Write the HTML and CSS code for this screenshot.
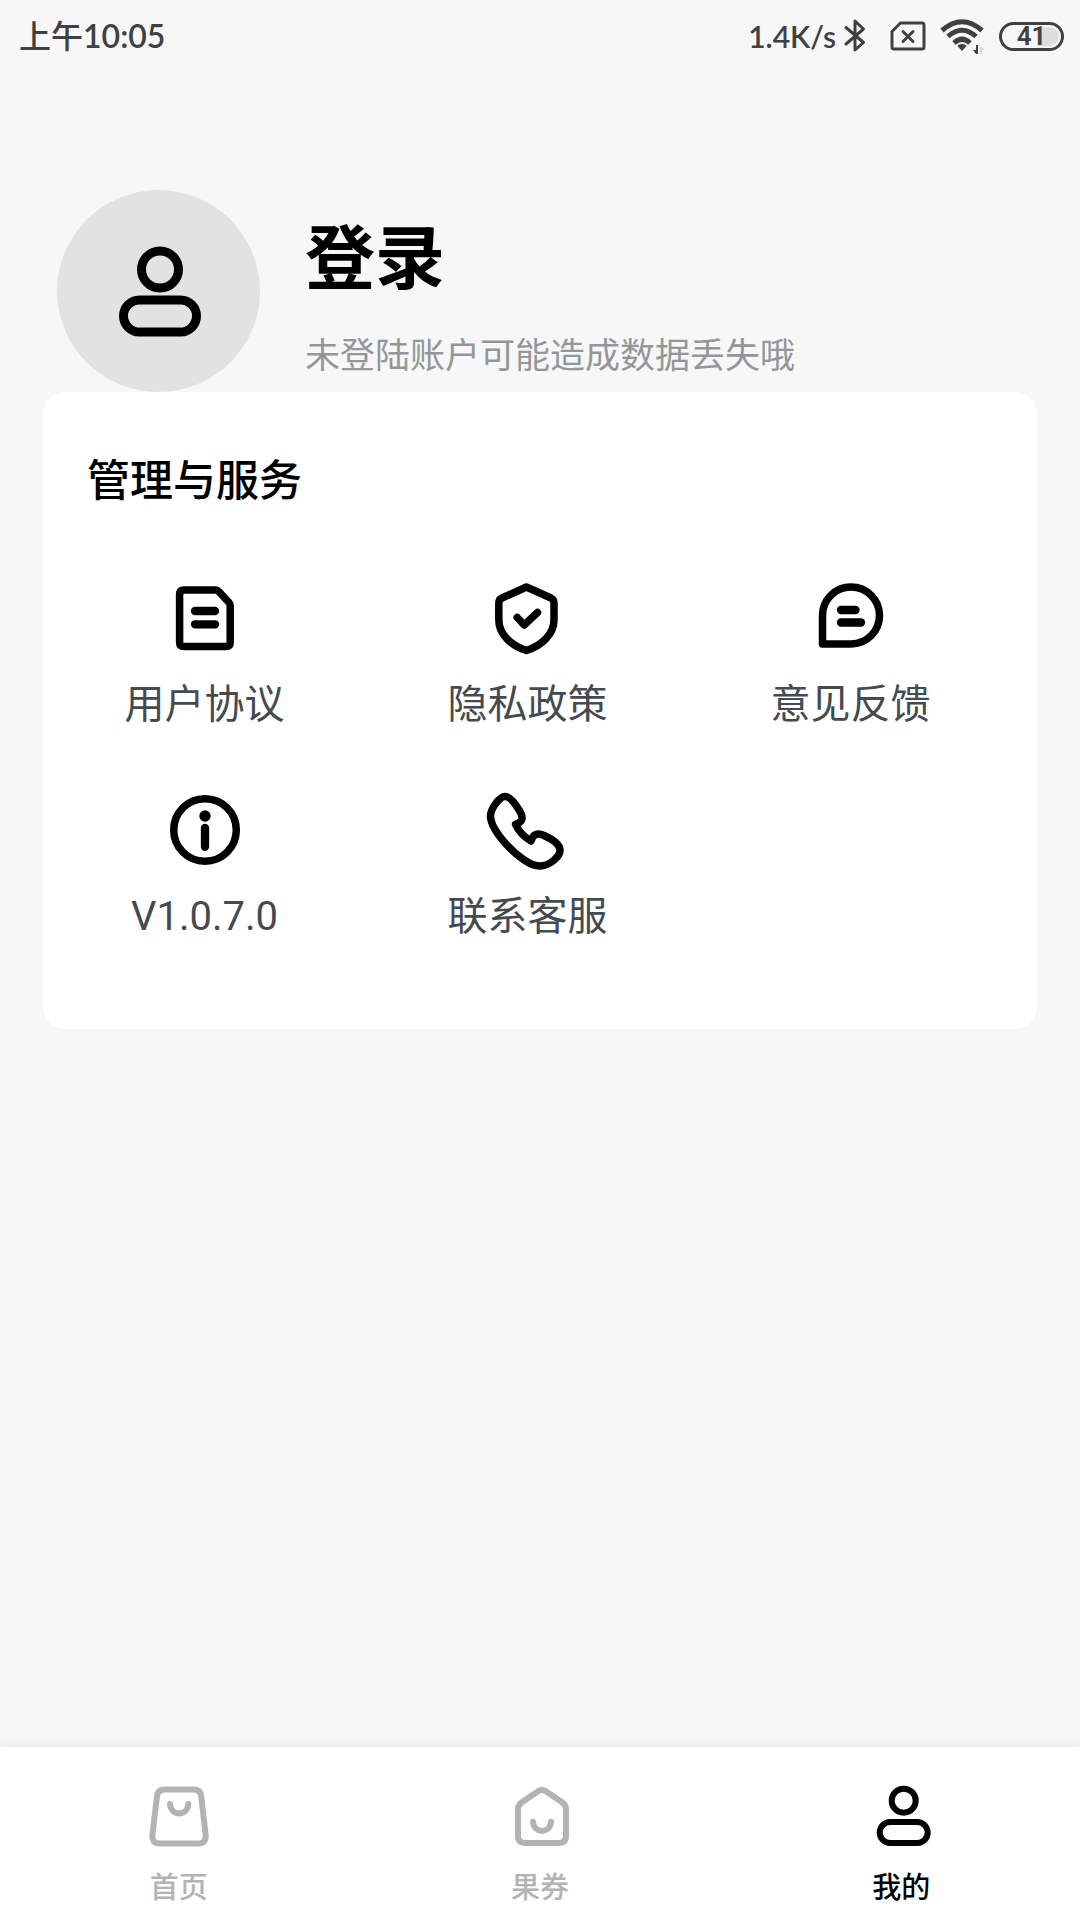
FILE: index.html
```html
<!DOCTYPE html>
<html lang="zh-CN">
<head>
<meta charset="utf-8">
<meta name="viewport" content="width=device-width, initial-scale=1">
<title>我的</title>
<link rel="stylesheet" href="styles.css">
</head>
<body>
<div class="status">
  <span class="status-time"><span class="status-period">上午</span>10:05</span>
  <div class="status-icons">
    <span class="status-speed">1.4K/s</span>
    <svg class="bluetooth" width="22" height="36" viewBox="0 0 22 36" aria-hidden="true"><path d="M2 9.500L19.500 24.500L11 32V3L19.500 11L2 26"/></svg>
    <svg class="sim" width="36" height="30" viewBox="0 0 36 30" aria-hidden="true"><path d="M10.500 2H32Q34 2 34 4V26Q34 28 32 28H4Q2 28 2 26V10.500Z"/><path d="M13 10.500L23 20.500M23 10.500L13 20.500"/></svg>
    <svg class="wifi" width="44" height="36" viewBox="0 0 44 36" aria-hidden="true"><path d="M1 12.500Q21 -5 41 12.500M7 18.500Q21 6 35 18.500M13 25Q21 17.500 29 25"/><path class="solid" d="M21 26Q24.500 26 25.500 28L21 33L16.500 28Q17.500 26 21 26Z"/><path class="solid" d="M37 27V36H35L32 32H35V27Z"/><path class="faint" d="M39 36V27L43 32H41V36Z"/></svg>
    <span class="battery">41</span>
  </div>
</div>

<header class="profile">
  <div class="avatar">
    <svg width="84" height="92" viewBox="0 0 84 92" aria-hidden="true"><circle cx="43" cy="24.500" r="18.500"/><rect x="6.500" y="55" width="73" height="32" rx="16"/></svg>
  </div>
  <div class="profile-text">
    <button class="login" type="button">登录</button>
    <p class="hint">未登陆账户可能造成数据丢失哦</p>
  </div>
</header>

<main class="card">
  <h2 class="card-title">管理与服务</h2>
  <div class="services">
    <button class="service" type="button">
      <svg viewBox="0 0 80 80" aria-hidden="true"><path d="M19 12H50.500Q52.500 12 54 13.700L64 24.500Q65.200 26 65.200 28V64.500Q65.200 68.600 61 68.600H19Q14.600 68.600 14.600 64.500V16.500Q14.600 12 19 12Z"/><path class="bar" d="M30 33H50M30 46.300H50"/></svg>
      <span>用户协议</span>
    </button>
    <button class="service" type="button">
      <svg viewBox="0 0 80 80" aria-hidden="true"><path d="M38.400 9L63 20Q66 21.500 66 25V42C66 56 54 67.500 38.400 72.500C22.800 67.500 10.800 56 10.800 42V25Q10.800 21.500 14 20Z"/><path d="M29.200 39.500L36.200 47L49.500 34.500"/></svg>
      <span>隐私政策</span>
    </button>
    <button class="service" type="button">
      <svg viewBox="0 0 80 80" aria-hidden="true"><path d="M11.500 66V37.500A28.500 28.500 0 1 1 40 66Z"/><path class="bar" d="M30 32H44.500M30 44.500H50"/></svg>
      <span>意见反馈</span>
    </button>
    <button class="service" type="button">
      <svg viewBox="0 0 80 80" aria-hidden="true"><circle cx="40" cy="40" r="31.300"/><circle class="dot" cx="40" cy="26" r="5.700"/><path class="bar" d="M40 38V56.800"/></svg>
      <span>V1.0.7.0</span>
    </button>
    <button class="service" type="button">
      <svg viewBox="0 0 80 80" aria-hidden="true"><path d="M17 6.500C22 6.500 27 13 32 21.500C36 28.500 34 32.500 27.500 34.300C30.500 41 36 47 43 51C45 44 49.500 42.500 56 45.500C64 49 71.500 54 72 60C72.500 66 62 76 51.500 76C42 76 28 65 18 54C9 44 2.500 34 2.500 26C2.500 19 11.500 6.500 17 6.500Z"/></svg>
      <span>联系客服</span>
    </button>
  </div>
</main>

<nav class="tabs">
  <a class="tab" href="#home">
    <svg viewBox="0 0 64 64" aria-hidden="true"><path d="M18 5.500H46.500Q53.500 5.500 54.200 12L58.700 51.500Q59 59.500 51.500 59.500H12.500Q5 59.500 5.400 51.500L10 12Q10.700 5.500 18 5.500Z"/><path d="M23 20C24 32.500 40.300 32.500 41.300 20"/></svg>
    <span>首页</span>
  </a>
  <a class="tab" href="#coupons">
    <svg viewBox="0 0 64 64" aria-hidden="true"><path d="M30.500 7Q34 4.800 37.500 7L54.500 18.500Q58 21 58 25.500V51.500Q58 59 50.500 59H17.500Q10 59 10 51.500V25.500Q10 21 13.500 18.500Z"/><path d="M25 37.700C26 50 42 50 43 37.700"/></svg>
    <span>果券</span>
  </a>
  <a class="tab tab-active" href="#me" aria-current="page">
    <svg viewBox="0 0 64 64" aria-hidden="true"><circle cx="34.700" cy="16.700" r="12"/><rect x="10.700" y="38" width="48" height="21" rx="10.500"/></svg>
    <span>我的</span>
  </a>
</nav>
</body>
</html>
```
FILE: styles.css
```css
* { box-sizing: border-box; }

body {
  margin: 0;
  min-height: 100vh;
  display: flex;
  flex-direction: column;
  background: #f7f7f7;
  color: #000;
  font-family: Roboto, "Noto Sans CJK SC", sans-serif;
}

button {
  margin: 0;
  padding: 0;
  border: 0;
  background: none;
  color: inherit;
  font: inherit;
  cursor: pointer;
}

svg {
  flex: none;
  fill: none;
  stroke: currentColor;
  stroke-linecap: round;
  stroke-linejoin: round;
  overflow: visible;
}

/* Status bar */
.status {
  display: flex;
  align-items: center;
  justify-content: space-between;
  height: 72px;
  padding: 0 16px 0 19px;
  color: #404040;
  font-family: Lato, "Noto Sans CJK SC", sans-serif;
  font-weight: 600;
  line-height: 40px;
}
.status-time { font-size: 32px; }
.status-period { font-weight: 500; }
.status-icons { display: flex; align-items: center; }
.status-speed { font-size: 30px; }
.bluetooth { margin-left: 8px; stroke-width: 3; }
.sim { margin-left: 24px; stroke-width: 3; }
.wifi { margin-left: 15px; stroke-width: 5; stroke-linecap: butt; }
.wifi .solid { fill: currentColor; stroke: none; }
.wifi .faint { fill: #d5d5d5; stroke: none; }
.battery {
  width: 65px;
  height: 29px;
  margin-left: 14px;
  padding: 2px;
  border: 3px solid #404040;
  border-radius: 15px;
  background: linear-gradient(90deg, transparent 60%, #ddd 60%) content-box;
  font: 600 26px/19px Roboto, sans-serif;
  text-align: center;
}

/* Profile header */
.profile {
  display: flex;
  gap: 45px;
  padding: 118px 57px 0;
}
.avatar {
  display: flex;
  align-items: center;
  justify-content: center;
  flex: none;
  width: 203px;
  height: 202px;
  border-radius: 50%;
  background: #e2e2e2;
}
.avatar svg { stroke-width: 9; }
.profile-text {
  display: flex;
  flex-direction: column;
  align-items: flex-start;
  gap: 33px;
  padding-top: 30px;
}
.login {
  font-size: 70px;
  line-height: 80px;
  font-weight: 700;
}
.hint {
  margin: 0;
  color: #93969a;
  font-size: 35px;
  line-height: 48px;
}

/* Services card */
.card {
  margin: 0 43px;
  padding: 57px 0 84px;
  border-radius: 22px;
  background: #fff;
}
.card-title {
  margin: 0 44px 65px;
  font-size: 43px;
  line-height: 64px;
  font-weight: 500;
}
.services {
  display: grid;
  grid-template-columns: repeat(3, 1fr);
  row-gap: 57px;
  padding-right: 25px;
}
.service {
  display: flex;
  flex-direction: column;
  align-items: center;
  gap: 19px;
  color: #444a4f;
  font-size: 40px;
  line-height: 56px;
}
.service svg {
  width: 80px;
  height: 80px;
  color: #000;
  stroke-width: 7.5;
}
.service .bar { stroke-width: 8.3; }
.service .dot { fill: currentColor; stroke: none; }

/* Bottom tabs */
.tabs {
  display: grid;
  grid-template-columns: repeat(3, 1fr);
  column-gap: 4px;
  margin-top: auto;
  padding: 37px 0 12px;
  background: #fff;
  box-shadow: 0 -3px 10px rgba(0, 0, 0, .06);
}
.tab {
  display: flex;
  flex-direction: column;
  align-items: center;
  gap: 20px;
  color: #b3b3b3;
  font-size: 29px;
  line-height: 40px;
  font-weight: 500;
  text-decoration: none;
}
.tab svg {
  width: 64px;
  height: 64px;
  stroke-width: 6;
}
.tab-active { color: #000; }
```
